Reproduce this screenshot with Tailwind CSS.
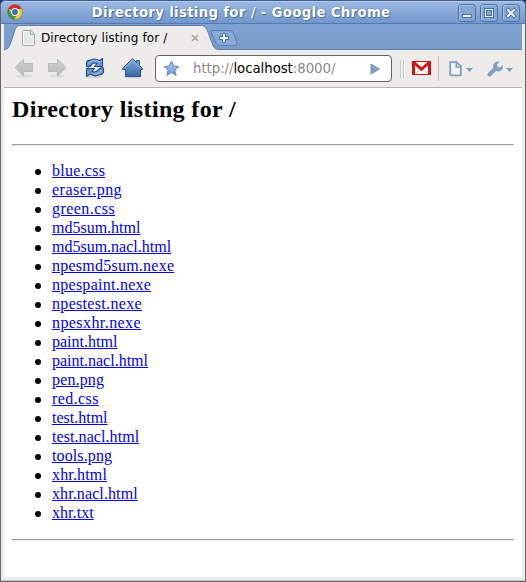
<!DOCTYPE html>
<html lang="en">
<head>
<meta charset="utf-8">
<title>Directory listing for /</title>
<script src="https://cdn.jsdelivr.net/npm/@tailwindcss/browser@4"></script>
</head>
<body class="w-[526px] h-[582px] overflow-hidden bg-[#0f3f78]">
<div class="w-[526px] h-[582px] flex flex-col rounded-t-[6px] overflow-hidden bg-[#edeceb] border-l border-r border-b border-[#666666]">
  <!-- title bar -->
  <header class="h-6 -mx-px shrink-0 flex items-center border-t border-[#3d5c8c] border-b border-b-[#5379af] bg-linear-to-b from-[#9dbae4] to-[#7398cd] pl-[7px] pr-[6px] shadow-[inset_0_1px_0_#b2caeb] rounded-t-[6px]">
    <svg class="w-4 h-4 shrink-0" viewBox="0 0 16 16">
      <circle cx="8" cy="8" r="7.500" fill="#f4cf32"/>
      <path d="M8 8 1.400 4.500A7.500 7.500 0 0 1 14.800 5L8 5Z" fill="#d2302a"/>
      <path d="M1.400 4.400A7.500 7.500 0 0 0 7.200 15.500L10.400 10 5 9.600Z" fill="#3f9a45"/>
      <circle cx="8" cy="8" r="7.400" fill="none" stroke="#4b4a3a" stroke-opacity=".45" stroke-width=".8"/>
      <circle cx="8" cy="8" r="3.900" fill="#f5f6fa"/>
      <circle cx="8" cy="8" r="2.900" fill="#3a6fb6"/>
    </svg>
    <h1 class="grow text-center pt-px pl-px whitespace-nowrap text-[13.3px] leading-[22px] tracking-[0.32px] font-bold text-white font-['DejaVu_Sans',sans-serif] [text-shadow:1px_1px_1px_#48699c,0_0_1px_#48699c]">Directory listing for / - Google Chrome</h1>
    <div class="flex gap-1 shrink-0 mt-px">
      <svg class="w-[18px] h-[18px]" viewBox="0 0 18 18"><rect x=".5" y=".5" width="17" height="17" rx="3" fill="#84a7d8" stroke="#49709f"/><path d="M1.500 16V3Q1.500 1.500 3 1.500H15" fill="none" stroke="#a9c3e8"/><rect x="4.500" y="10.500" width="9" height="3" fill="#f2f6fb" stroke="#49709f"/></svg>
      <svg class="w-[18px] h-[18px]" viewBox="0 0 18 18"><rect x=".5" y=".5" width="17" height="17" rx="3" fill="#84a7d8" stroke="#49709f"/><path d="M1.500 16V3Q1.500 1.500 3 1.500H15" fill="none" stroke="#a9c3e8"/><rect x="4.500" y="4.500" width="9" height="9" fill="#e8eff9" stroke="#49709f"/><rect x="6.500" y="6.500" width="5" height="5" fill="#84a7d8" stroke="#49709f"/></svg>
      <svg class="w-[18px] h-[18px]" viewBox="0 0 18 18"><rect x=".5" y=".5" width="17" height="17" rx="3" fill="#84a7d8" stroke="#49709f"/><path d="M1.500 16V3Q1.500 1.500 3 1.500H15" fill="none" stroke="#a9c3e8"/><path d="m6 6 6 6m0-6-6 6" stroke="#49709f" stroke-width="4" stroke-linecap="square"/><path d="m6 6 6 6m0-6-6 6" stroke="#f2f6fb" stroke-width="2" stroke-linecap="square"/></svg>
    </div>
  </header>

  <!-- tab strip -->
  <div class="relative h-[26px] mx-[3px] shrink-0 bg-linear-to-b from-[#7fa2d2] to-[#779bca]">
    <svg class="absolute inset-0 w-[518px] h-[26px]" viewBox="0 0 518 26">
      <path d="M0 25.500C5 25.500 6 21 8 15L10.500 7C12 3 13 1.500 17 1.500H196C200 1.500 202 3 204 8L208 19C210 24 211 25.500 215 25.500H518V26H0Z" fill="#edeceb"/>
      <path d="M0 25.500C5 25.500 6 21 8 15L10.500 7C12 3 13 1.500 17 1.500H196C200 1.500 202 3 204 8L208 19C210 24 211 25.500 215 25.500H518" fill="none" stroke="#5f7da5"/>
      <path d="M208.500 6.500H226Q228.500 6.500 229.500 9L233 18.500Q233.500 21.500 231 21.500H216Q213 21.500 212 19L207.500 9Q206.500 6.500 208.500 6.500Z" fill="#89abd9" stroke="#5c7dad"/>
      <path d="M218.500 9.500h3v3h3v3h-3v3h-3v-3h-3v-3h3z" fill="#f3f7fc" stroke="#446ca3"/>
    </svg>
    <div class="relative flex items-center h-full pl-[18px]">
      <svg class="w-[13px] h-4 mt-px shrink-0" viewBox="0 0 13 16"><path d="M1.500.5H9L12.500 4v10.500q0 1-1 1h-10q-1 0-1-1v-13q0-1 1-1Z" fill="#e5e7e3" stroke="#a1a49d"/><path d="M1.500 1.500H8.500V4.500H11.500V14.500H1.500Z" fill="none" stroke="#fafafa"/><path d="M8.500 1V4.500H12" fill="none" stroke="#a8aaa6"/></svg>
      <span class="ml-[6px] w-[150px] whitespace-nowrap text-[12px] leading-[16px] tracking-[0.13px] text-black font-['DejaVu_Sans',sans-serif] mt-[2px]">Directory listing for /</span>
      <svg class="w-2 h-2 mt-[2px]" viewBox="0 0 8 8"><path d="m1 1 6 6m0-6L1 7" stroke="#a5a4a3" stroke-width="1.700"/></svg>
    </div>
  </div>

  <!-- toolbar -->
  <div class="h-[38px] mx-[3px] shrink-0 flex items-center border-b border-[#b4b3b2]">
    <svg class="w-[22px] h-[22px] ml-[9px] -mt-px shrink-0" viewBox="0 0 22 22"><defs><linearGradient id="g" x2="0" y2="1"><stop stop-color="#cfd1d2"/><stop offset="1" stop-color="#b7babc"/></linearGradient></defs><ellipse cx="12" cy="19" rx="8" ry="2" fill="#dfdedd"/><path d="M2 10.500 10.500 2V6.500H19.500V14.500H10.500V19Z" fill="url(#g)" stroke="#b9bbbd"/></svg>
    <svg class="w-[22px] h-[22px] ml-[12px] -mt-px shrink-0" viewBox="0 0 22 22"><ellipse cx="10" cy="19" rx="8" ry="2" fill="#dfdedd"/><path d="M19 10.500 10.500 2V6.500H1.500V14.500H10.500V19Z" fill="url(#g)" stroke="#b9bbbd"/></svg>
    <svg class="w-[22px] h-[22px] ml-[15px] -mt-px shrink-0" viewBox="0 0 22 22">
      <ellipse cx="11" cy="20" rx="8" ry="1.300" fill="#d6d5d4"/>
      <g stroke="#204a87" stroke-width="1.100" stroke-linejoin="round" fill="#6895ca">
      <path d="M2.500 9.500V5.500Q3 3 5.500 3.500Q10 .5 15.500 3.500L18.500 1.500V9.500H10.500L13 6.500Q9 5 7 8.500Q5 10.500 2.500 9.500Z"/>
      <path d="M19.500 11V15.500Q18 18 16 17.500Q11 20.500 6.500 17L2.500 19.500V11.500H10.500L8 14.500Q12 16 14 13Q16 10.500 19.500 11Z"/></g>
      <path d="M4 6.500Q9 1.500 15.500 5L17.300 4M5 15.500 3.700 16.800M8 16.500Q13 18.500 18 13" fill="none" stroke="#a8c4e5"/>
    </svg>
    <svg class="w-[24px] h-[22px] ml-[15px] -mt-px shrink-0" viewBox="0 0 24 22"><defs><linearGradient id="h" x2="0" y2="1"><stop stop-color="#84abd8"/><stop offset="1" stop-color="#3769a7"/></linearGradient></defs><ellipse cx="12" cy="20" rx="10" ry="1.500" fill="#d4d3d2"/><path d="M1.500 11.500 11.500 1.500 15.500 5.500V3.500H18.500V8.500L21.500 11.500V12.500H19.500V19.500H4.500V12.500H1.500Z" fill="url(#h)" stroke="#2c5895"/><path d="M3.500 11.500 11.500 3.300 19.500 11.500" fill="none" stroke="#9bbce0" stroke-width=".8"/></svg>
    <div class="ml-[10px] w-[237px] h-[27px] shrink-0 flex items-center rounded-[4px] border border-[#646361] bg-white">
      <svg class="w-[17px] h-[17px] ml-[7px]" viewBox="0 0 17 17"><defs><linearGradient id="s" x2="0" y2="1"><stop stop-color="#b0cff4"/><stop offset="1" stop-color="#6998da"/></linearGradient></defs><path d="m8.500 1 2.100 5 5.400.5-4.100 3.500 1.300 5.500-4.700-2.900-4.700 2.900 1.300-5.500L1 6.500 6.400 6Z" fill="url(#s)" stroke="#6d88b5" stroke-linejoin="round"/></svg>
      <span class="ml-[13px] w-[177px] whitespace-nowrap text-[13.3px] leading-[18px] tracking-[-0.04px] text-[#888888] font-['DejaVu_Sans',sans-serif]">http://<span class="text-black">localhost</span>:8000/</span>
      <svg class="w-[10px] h-[12px] shrink-0" viewBox="0 0 10 12"><path d="M1 1 9.500 6 1 11Z" fill="#829ec6" stroke="#7994ba" stroke-linejoin="round"/></svg>
    </div>
    <svg class="w-[6px] h-[18px] ml-[8px] shrink-0" viewBox="0 0 6 18"><path d="M.5 0V18M3.500 0V18" stroke="#c8c7c5"/><path d="M1.500 0V18M4.500 0V18" stroke="#fafafa"/></svg>
    <svg class="w-[19px] h-[14px] ml-[6px] -mt-px shrink-0" viewBox="0 0 19 14"><rect width="19" height="14" fill="#dc1013"/><rect x="3" y="1" width="13" height="12" fill="#f8f6f6"/><path d="M3.500 12.500 8 8M15.500 12.500 11 8" stroke="#dcc8c8" stroke-width=".8"/><path d="M2 1.500 9.500 8.300 17 1.500" fill="none" stroke="#dc1013" stroke-width="2.800"/><path d="M0 13.500H19M.5 0V14M18.500 0V14" stroke="#b51a1c" stroke-opacity=".6"/></svg>
    <div class="w-px h-[25px] ml-[7px] bg-[#bfbebd]"></div>
    <svg class="w-[24px] h-[16px] ml-[10px] shrink-0" viewBox="0 0 24 16"><path d="M1.200 1.200H7.500L11.800 5.500V14.300H1.200Z" fill="#f3f4f5" stroke="#7f9bc1" stroke-width="1.800" stroke-linejoin="round"/><path d="M7.300 1.500V6H11.500" fill="none" stroke="#7f9bc1" stroke-width="1.500"/><path d="M17 7H24L20.500 11Z" fill="#7f9bc1"/></svg>
    <svg class="w-[26px] h-[16px] ml-[14px] shrink-0" viewBox="0 0 26 16"><path d="M2.500 13.500 9 7" stroke="#829ec4" stroke-width="4" stroke-linecap="round"/><path d="M7 8.500Q4.500 4 8 1.500Q10 0 12.500 1L10 3.500 10.500 6 13 6.500 15.500 4Q16.500 8 13.500 10Q10.500 11.500 7 8.500Z" fill="#829ec4"/><path d="M19 7H26L22.500 11Z" fill="#7f9bc1"/></svg>
  </div>

  <!-- page -->
  <main class="h-[489px] mx-[3px] shrink-0 px-2 bg-white text-black font-['Liberation_Serif',serif] text-[16px]">
    <h2 class="text-[24px] leading-[27px] tracking-[0.36px] font-bold pt-2 whitespace-nowrap">Directory listing for /</h2>
    <hr class="mt-[21px] h-[2px] border border-t-[#9a9a9a] border-l-[#9a9a9a] border-r-[#eeeeee] border-b-[#eeeeee]">
    <ul class="mt-[15px] pl-[23px] leading-[19px] [&_a]:text-[#0000ee] [&_a]:underline [&>li]:flex [&>li]:items-center [&>li]:gap-[11px] [&>li]:before:size-[6px] [&>li]:before:rounded-full [&>li]:before:bg-black [&>li]:before:mt-[2px]">
      <li><a class="tracking-[0.25px]">blue.css</a></li>
      <li><a class="tracking-[0.48px]">eraser.png</a></li>
      <li><a class="tracking-[0.44px]">green.css</a></li>
      <li><a>md5sum.html</a></li>
      <li><a>md5sum.nacl.html</a></li>
      <li><a class="tracking-[0.24px]">npesmd5sum.nexe</a></li>
      <li><a class="tracking-[0.26px]">npespaint.nexe</a></li>
      <li><a class="tracking-[0.32px]">npestest.nexe</a></li>
      <li><a class="tracking-[0.42px]">npesxhr.nexe</a></li>
      <li><a>paint.html</a></li>
      <li><a>paint.nacl.html</a></li>
      <li><a class="tracking-[0.14px]">pen.png</a></li>
      <li><a class="tracking-[0.4px]">red.css</a></li>
      <li><a>test.html</a></li>
      <li><a class="tracking-[0.07px]">test.nacl.html</a></li>
      <li><a class="tracking-[0.11px]">tools.png</a></li>
      <li><a class="tracking-[0.15px]">xhr.html</a></li>
      <li><a class="tracking-[0.1px]">xhr.nacl.html</a></li>
      <li><a class="tracking-[0.05px]">xhr.txt</a></li>
    </ul>
    <hr class="mt-[17px] h-[2px] border border-t-[#9a9a9a] border-l-[#9a9a9a] border-r-[#eeeeee] border-b-[#eeeeee]">
  </main>
  <div class="mt-auto h-px bg-[#c8c7c6]"></div>
</div>
</body>
</html>
